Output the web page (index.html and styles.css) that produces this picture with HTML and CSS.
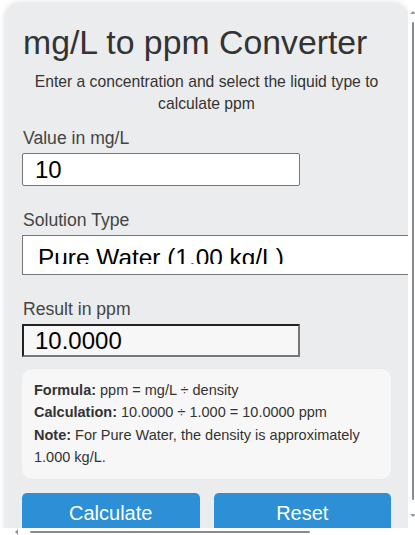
FILE: index.html
```html
<!DOCTYPE html>
<html lang="en">
<head>
    <meta charset="UTF-8">
    <meta name="viewport" content="width=device-width, initial-scale=1.0">
    <title>mg/L to ppm Converter</title>
    <link rel="stylesheet" href="styles.css">
</head>
<body>
    <div class="frame">
        <div class="viewport">
            <div class="card">
                <h1>mg/L to ppm Converter</h1>
                <p class="intro">Enter a concentration and select the liquid type to calculate ppm</p>

                <div class="field">
                    <label for="mgl">Value in mg/L</label>
                    <input type="text" id="mgl" class="text-input" value="10">
                </div>

                <div class="field">
                    <label>Solution Type</label>
                    <div class="select"><span>Pure Water (1.00 kg/L)</span></div>
                </div>

                <div class="field last">
                    <label for="ppm">Result in ppm</label>
                    <input type="text" id="ppm" class="text-input result" value="10.0000" readonly>
                </div>

                <div class="info">
                    <div><b>Formula:</b> ppm = mg/L ÷ density</div>
                    <div><b>Calculation:</b> 10.0000 ÷ 1.000 = 10.0000 ppm</div>
                    <div><b>Note:</b> For Pure Water, the density is approximately 1.000 kg/L.</div>
                </div>

                <div class="buttons">
                    <button class="btn">Calculate</button>
                    <button class="btn">Reset</button>
                </div>
            </div>
        </div>

        <!-- fake scrollbars of the embedding frame -->
        <div class="vscroll">
            <span class="arrow up"></span>
            <span class="thumb"></span>
            <span class="arrow down"></span>
        </div>
        <div class="hscroll">
            <span class="arrow left"></span>
            <span class="thumb"></span>
        </div>
    </div>
</body>
</html>
```

FILE: styles.css
```css
body {
    margin: 0;
    background: #fff;
    font-family: "Liberation Sans", Arial, sans-serif;
    color: #333;
}
.frame {
    position: relative;
    width: 415px;
    height: 535px;
    overflow: hidden;
}
.viewport {
    width: 408px;
    height: 528px;
    overflow: hidden;
}
.card {
    margin: 3px 0 0 5px;
    width: 403px;
    height: 560px;
    box-sizing: border-box;
    padding: 21px 17px 0;
    background: #ebeced;
    border-radius: 15px 15px 0 0;
    box-shadow: 0 0 6px rgba(0, 0, 0, 0.15);
}
h1 {
    margin: 0 0 11px 1px;
    font-size: 33.8px;
    line-height: 36px;
    font-weight: normal;
    color: #333;
}
.intro {
    margin: 0 0 13px;
    font-size: 15.7px;
    line-height: 22px;
    text-align: center;
}
.field {
    margin-bottom: 24px;
}
.field.last {
    margin-bottom: 12px;
}
.field label {
    display: block;
    margin: 0 0 5px 1px;
    font-size: 17.6px;
    line-height: 20px;
    color: #444;
}
.text-input {
    display: block;
    width: 278px;
    height: 33px;
    box-sizing: border-box;
    margin: 0;
    padding: 0 12px;
    border: 1px solid #767676;
    border-radius: 2px;
    font-family: "Liberation Sans", Arial, sans-serif;
    font-size: 24px;
    color: #000;
    background: #fff;
}
.text-input.result {
    padding: 0 11px;
    border: 2px solid;
    border-color: #222 #777 #777 #222;
    border-radius: 0;
    background: #f7f7f7;
}
.select {
    width: 420px;
    height: 40px;
    box-sizing: border-box;
    padding: 8px 15px 10px;
    border: 1px solid #767676;
    background: #fff;
    font-size: 24.4px;
    color: #000;
}
.select span {
    display: block;
    height: 20px;
    overflow: hidden;
    white-space: nowrap;
}
.info {
    padding: 10px 12px;
    background: #f7f7f7;
    border-radius: 10px;
    font-size: 14.5px;
    line-height: 22.4px;
}
.buttons {
    display: flex;
    gap: 14px;
    margin-top: 14px;
}
.btn {
    flex: 1;
    padding: 9px 0 14px;
    border: none;
    border-radius: 5px;
    background: #2d8fd6;
    color: #fff;
    font-family: "Liberation Sans", Arial, sans-serif;
    font-size: 20px;
}
.vscroll {
    position: absolute;
    top: 0;
    right: 0;
    width: 7px;
    height: 528px;
}
.vscroll .thumb {
    position: absolute;
    left: 4px;
    top: 22px;
    width: 2px;
    height: 478px;
    background: #8a8a8a;
    border-radius: 1px;
}
.arrow {
    position: absolute;
    width: 0;
    height: 0;
    border: 3px solid transparent;
}
.arrow.up {
    left: 2px;
    top: 8px;
    border-bottom-color: #999;
}
.arrow.down {
    left: 2px;
    top: 514px;
    border-top-color: #999;
}
.hscroll {
    position: absolute;
    left: 0;
    bottom: 0;
    width: 408px;
    height: 7px;
}
.hscroll .thumb {
    position: absolute;
    left: 30px;
    top: 3px;
    width: 280px;
    height: 2px;
    background: #8a8a8a;
    border-radius: 1px;
}
.arrow.left {
    left: 12px;
    top: 1px;
    border-right-color: #999;
}
```
